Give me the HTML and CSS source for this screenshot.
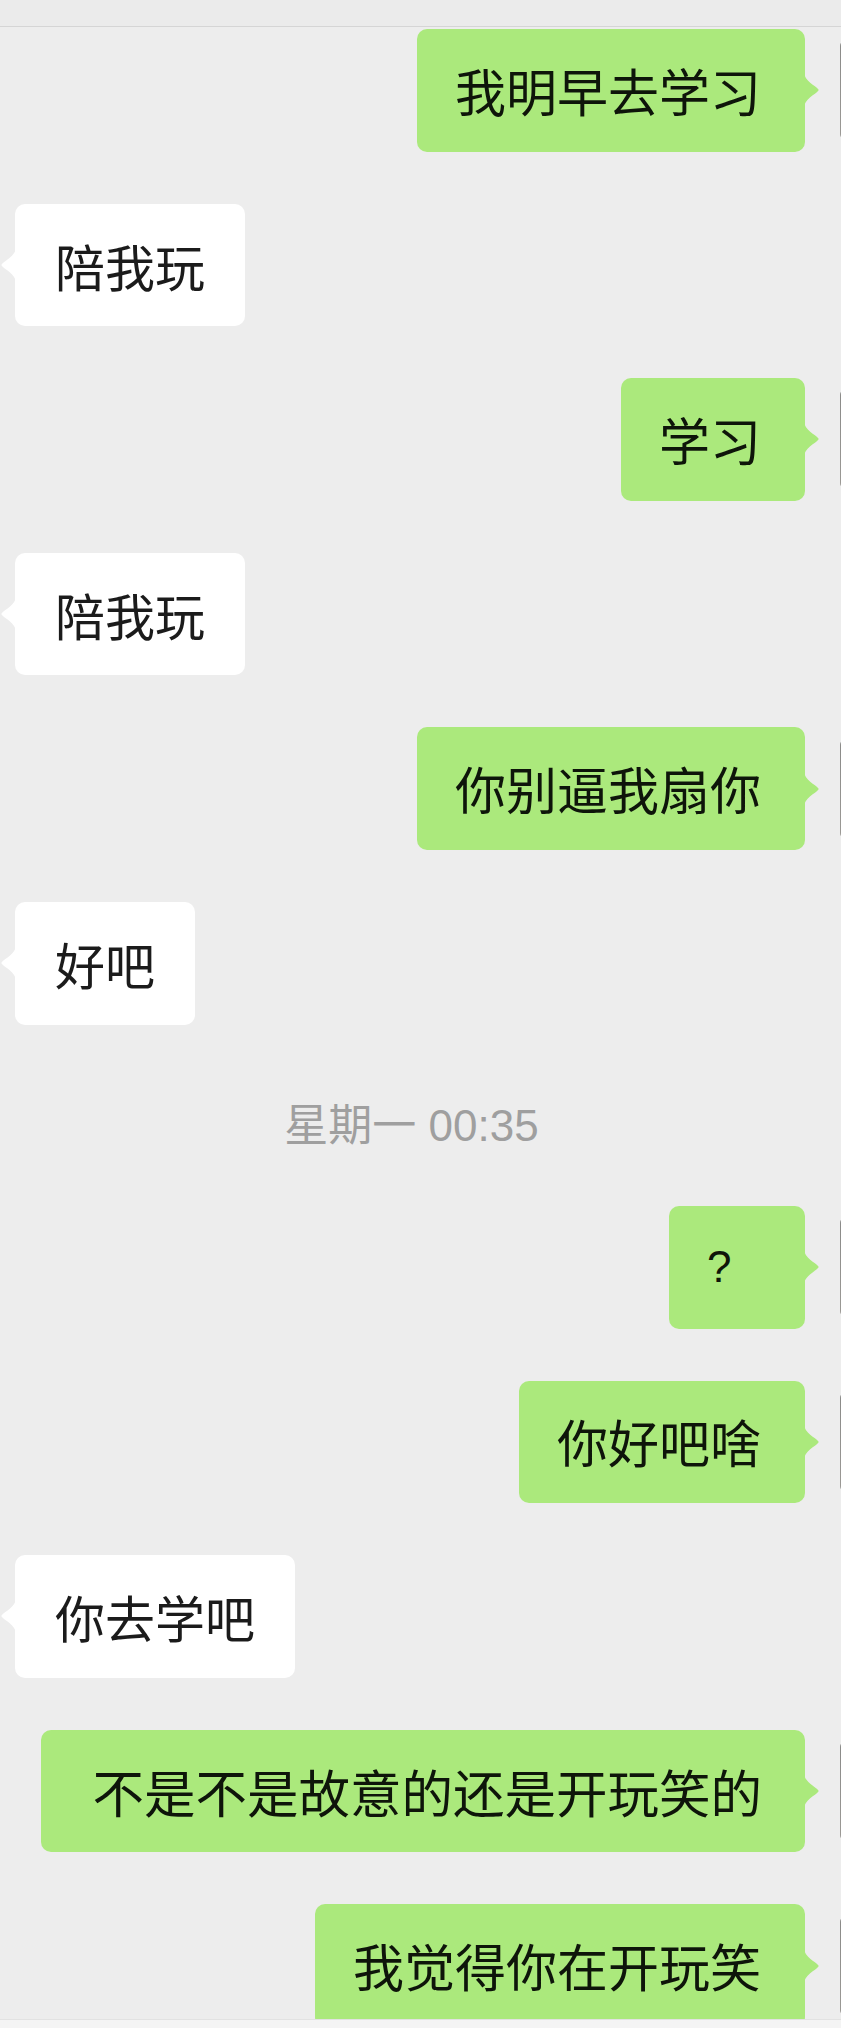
FILE: index.html
```html
<!DOCTYPE html>
<html lang="zh-CN">
<head>
<meta charset="utf-8">
<title>聊天记录</title>
<link rel="stylesheet" href="styles.css">
</head>
<body>
<div class="screen">
  <div class="topbar"></div>
  <div class="chat">
    <div class="row me">
      <div class="bubble green">我明早去学习<svg class="tail tail-r" viewBox="0 0 15 36"><path d="M0,0 C0,9 12,14 14,17 C15,18.5 15,17.5 14,19 C12,22 0,27 0,36 Z"/></svg></div>
      <div class="avatar"></div>
    </div>
    <div class="row other">
      <div class="bubble white"><svg class="tail tail-l" viewBox="0 0 15 36"><path d="M15,0 C15,9 3,14 1,17 C0,18.5 0,17.5 1,19 C3,22 15,27 15,36 Z"/></svg>陪我玩</div>
    </div>
    <div class="row me">
      <div class="bubble green">学习<svg class="tail tail-r" viewBox="0 0 15 36"><path d="M0,0 C0,9 12,14 14,17 C15,18.5 15,17.5 14,19 C12,22 0,27 0,36 Z"/></svg></div>
      <div class="avatar"></div>
    </div>
    <div class="row other">
      <div class="bubble white"><svg class="tail tail-l" viewBox="0 0 15 36"><path d="M15,0 C15,9 3,14 1,17 C0,18.5 0,17.5 1,19 C3,22 15,27 15,36 Z"/></svg>陪我玩</div>
    </div>
    <div class="row me">
      <div class="bubble green">你别逼我扇你<svg class="tail tail-r" viewBox="0 0 15 36"><path d="M0,0 C0,9 12,14 14,17 C15,18.5 15,17.5 14,19 C12,22 0,27 0,36 Z"/></svg></div>
      <div class="avatar"></div>
    </div>
    <div class="row other">
      <div class="bubble white"><svg class="tail tail-l" viewBox="0 0 15 36"><path d="M15,0 C15,9 3,14 1,17 C0,18.5 0,17.5 1,19 C3,22 15,27 15,36 Z"/></svg>好吧</div>
    </div>
    <div class="time">星期一 00:35</div>
    <div class="row me">
      <div class="bubble green q"><span class="qmark">?</span><svg class="tail tail-r" viewBox="0 0 15 36"><path d="M0,0 C0,9 12,14 14,17 C15,18.5 15,17.5 14,19 C12,22 0,27 0,36 Z"/></svg></div>
      <div class="avatar"></div>
    </div>
    <div class="row me">
      <div class="bubble green">你好吧啥<svg class="tail tail-r" viewBox="0 0 15 36"><path d="M0,0 C0,9 12,14 14,17 C15,18.5 15,17.5 14,19 C12,22 0,27 0,36 Z"/></svg></div>
      <div class="avatar"></div>
    </div>
    <div class="row other">
      <div class="bubble white"><svg class="tail tail-l" viewBox="0 0 15 36"><path d="M15,0 C15,9 3,14 1,17 C0,18.5 0,17.5 1,19 C3,22 15,27 15,36 Z"/></svg>你去学吧</div>
    </div>
    <div class="row me">
      <div class="bubble green wide">不是不是故意的还是开玩笑的<svg class="tail tail-r" viewBox="0 0 15 36"><path d="M0,0 C0,9 12,14 14,17 C15,18.5 15,17.5 14,19 C12,22 0,27 0,36 Z"/></svg></div>
      <div class="avatar"></div>
    </div>
    <div class="row me">
      <div class="bubble green">我觉得你在开玩笑<svg class="tail tail-r" viewBox="0 0 15 36"><path d="M0,0 C0,9 12,14 14,17 C15,18.5 15,17.5 14,19 C12,22 0,27 0,36 Z"/></svg></div>
      <div class="avatar"></div>
    </div>
  </div>
  <div class="bottombar"></div>
</div>
</body>
</html>
```
FILE: styles.css
```css
html, body {
  margin: 0;
  padding: 0;
  background: #ededed;
}

.screen {
  width: 841px;
  height: 2028px;
  display: flex;
  flex-direction: column;
  overflow: hidden;
  background: #ededed;
  font-family: "Noto Sans CJK SC", "Noto Sans", sans-serif;
}

.topbar {
  height: 26px;
  flex: none;
  background: #ebebeb;
  border-bottom: 1px solid #d5d5d5;
}

.chat {
  flex: 1;
  min-height: 0;
  overflow: hidden;
  padding-top: 2px;
  display: flex;
  flex-direction: column;
  gap: 52px;
}

.row {
  flex: none;
  height: 122.6px;
  display: flex;
  align-items: center;
}

.row.me {
  justify-content: flex-end;
}

.row.other {
  justify-content: flex-start;
  padding-left: 15px;
}

.bubble {
  position: relative;
  height: 122.6px;
  box-sizing: border-box;
  display: flex;
  align-items: center;
  border-radius: 10px;
  line-height: 1;
  white-space: nowrap;
}

.bubble.green {
  background: #abe97c;
  color: #0e150a;
  margin-right: 35px;
  font-size: 51px;
  padding: 0 44px 0 38px;
}

.bubble.white {
  background: #ffffff;
  color: #1b1b1b;
  font-size: 50px;
  padding: 0 40px;
}

.bubble.wide {
  font-size: 51.5px;
  padding-left: 51px;
  padding-right: 43px;
}

.bubble.q {
  padding-left: 38px;
  padding-right: 44px;
}

.qmark {
  display: inline-block;
  width: 54px;
  font-family: "Liberation Sans", sans-serif;
  font-size: 44px;
}

.tail {
  position: absolute;
  top: 50%;
  width: 15px;
  height: 36px;
  margin-top: -18px;
}

.tail-r {
  right: -14px;
  fill: #abe97c;
}

.tail-l {
  left: -14px;
  fill: #ffffff;
}

.avatar {
  flex: none;
  width: 100px;
  height: 100px;
  margin-right: -99px;
  border-radius: 6px;
  background: linear-gradient(180deg, #8a8a88, #9c9a96);
}

.time {
  flex: none;
  height: 77.4px;
  box-sizing: border-box;
  padding: 20px 18px 0 0;
  line-height: 57.4px;
  text-align: center;
  font-size: 44px;
  color: #9f9f9f;
  font-family: "Liberation Sans", "Noto Sans CJK SC", sans-serif;
}

.bottombar {
  height: 8px;
  flex: none;
  background: #f4f4f4;
  border-top: 1px solid #e2e2e2;
}
```
